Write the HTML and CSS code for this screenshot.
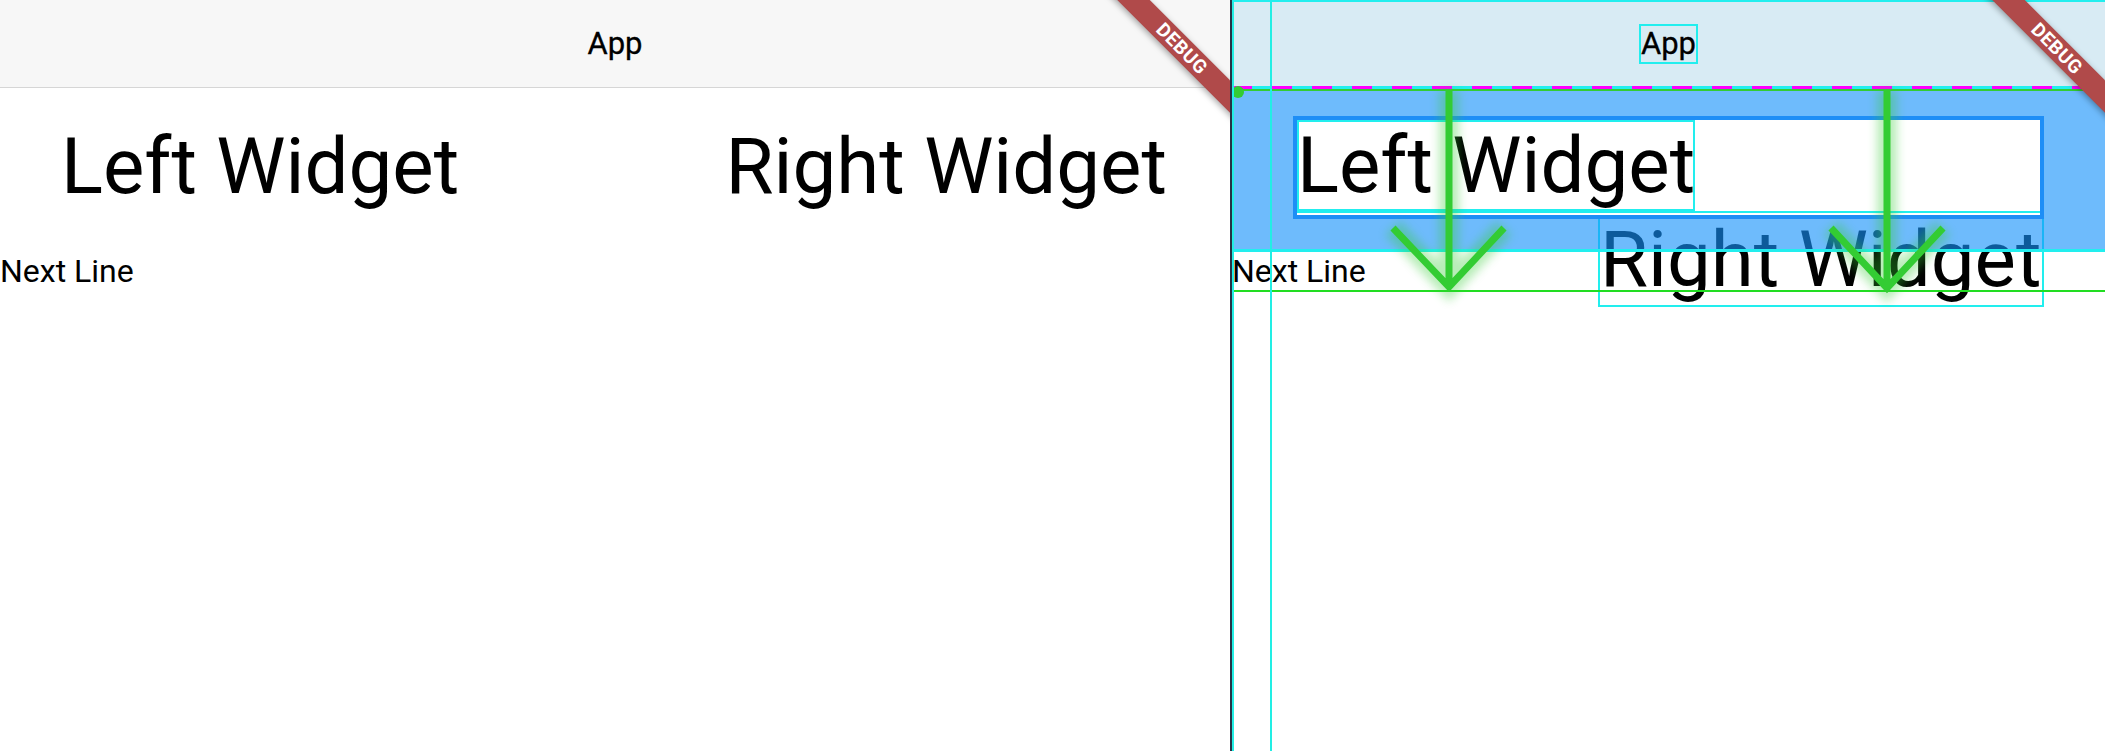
FILE: index.html
```html
<!DOCTYPE html>
<html lang="en">
<head>
    <meta charset="UTF-8">
    <meta name="viewport" content="width=device-width, initial-scale=1.0">
    <title>App</title>

    <link rel="stylesheet" href="styles.css">
</head>
<body>
  <div class="screen">
    <!-- normal view -->
    <section class="pane plain">
      <header class="appbar"><span class="title">App</span></header>
      <div class="row">
        <span class="big">Left Widget</span>
        <span class="big">Right Widget</span>
      </div>
      <div class="next">Next Line</div>
      <div class="banner">DEBUG</div>
    </section>

    <div class="divider"></div>

    <!-- same page with debug paint on -->
    <section class="pane debug">
      <header class="appbar"><span class="title boxed">App</span></header>
      <div class="row wrapped">
        <div class="card">
          <div class="card-line"><span class="big boxed">Left Widget</span></div>
        </div>
      </div>
      <span class="big overflow">Right Widget</span>
      <div class="next ruled">Next Line</div>

      <div class="dash"></div>
      <div class="dot"></div>
      <div class="vline first"></div>
      <div class="vline second"></div>
      <div class="hline"></div>

      <svg class="arrows" width="873" height="751" viewBox="0 0 873 751">
        <g class="glow">
          <path d="M217 90 V287 M161 228 L217 287 L272 228"/>
          <path d="M655 90 V288 M599 228 L655 288 L711 228"/>
        </g>
        <g class="core">
          <path d="M217 90 V287 M161 228 L217 287 L272 228"/>
          <path d="M655 90 V288 M599 228 L655 288 L711 228"/>
        </g>
      </svg>

      <div class="banner">DEBUG</div>
    </section>
  </div>
</body>
</html>
```

FILE: styles.css
```css
body {
  margin: 0;
  font-family: Roboto, "Liberation Sans", sans-serif;
  color: #000;
  background: #fff;
}

.screen {
  display: flex;
  width: 2105px;
  height: 751px;
}

.pane {
  position: relative;
  height: 751px;
  overflow: hidden;
}

.pane.plain {
  width: 1230px;
}

.pane.debug {
  flex: 1;
}

.divider {
  width: 2px;
  background: #283246;
}

/* app bar */
.appbar {
  height: 88px;
  box-sizing: border-box;
  display: flex;
  align-items: center;
  justify-content: center;
  background: #f7f7f7;
  border-bottom: 1px solid #d6d6d6;
}

.debug .appbar {
  background: #d8ebf4;
  border-bottom: none;
}

.title {
  font-size: 31px;
  font-weight: 400;
  line-height: 36px;
  -webkit-text-stroke: 0.3px #000;
}

.boxed {
  outline: 2px solid #22eeee;
}

/* content */
.row {
  height: 164px;
  box-sizing: border-box;
  display: flex;
  justify-content: space-between;
  align-items: flex-start;
  padding: 33px 63px 0 61px;
}

.big {
  font-size: 78px;
  line-height: 91px;
  white-space: nowrap;
}

.next {
  font-size: 32px;
  line-height: 37px;
  padding-top: 1px;
}

/* debug pane */
.row.wrapped {
  position: relative;
  z-index: 2;
  display: block;
  padding: 28px 0 0 61px;
  background: rgba(21, 145, 250, 0.62);
  border-bottom: 3px solid #22eeee;
}

.card {
  width: 751px;
  box-sizing: border-box;
  border: 4px solid #1e8ef6;
  background: #fff;
  padding-bottom: 2px;
}

.card-line {
  border-bottom: 2px solid #22eeee;
}

.card .big {
  display: inline-block;
  outline-offset: -2px;
}

.overflow {
  position: absolute;
  z-index: 1;
  left: 366px;
  top: 212px;
  border: 2px solid #22eeee;
}

.next.ruled {
  position: relative;
  z-index: 3;
  border-bottom: 2px solid #22dd22;
}

.dash {
  position: absolute;
  z-index: 4;
  top: 86px;
  left: 0;
  right: 0;
  height: 3px;
  background: repeating-linear-gradient(90deg, #ff00ff 0 20px, #22eeee 20px 40px);
  border-bottom: 2px solid #33cc33;
}

.dot {
  position: absolute;
  z-index: 4;
  left: 0;
  top: 86px;
  width: 12px;
  height: 12px;
  border-radius: 50%;
  background: #33cc33;
}

.vline {
  position: absolute;
  z-index: 5;
  top: 0;
  bottom: 0;
  width: 2px;
  background: #22eee4;
}

.vline.first {
  left: 0;
}

.vline.second {
  left: 38px;
}

.hline {
  position: absolute;
  z-index: 5;
  top: 0;
  left: 0;
  right: 0;
  height: 2px;
  background: #22eeee;
}

.arrows {
  position: absolute;
  z-index: 6;
  left: 0;
  top: 0;
  pointer-events: none;
}

.arrows path {
  fill: none;
  stroke: #33cc33;
  stroke-linejoin: miter;
}

.arrows .glow path {
  stroke-width: 20px;
  opacity: 0.35;
  filter: blur(5px);
}

.arrows .core path {
  stroke-width: 7px;
}

/* debug ribbon */
.banner {
  position: absolute;
  z-index: 10;
  top: 37px;
  right: -62px;
  width: 220px;
  height: 23px;
  transform: rotate(45deg);
  background: #b04a4a;
  color: #fff;
  font-size: 19px;
  font-weight: 700;
  line-height: 23px;
  letter-spacing: 0.5px;
  text-align: center;
  box-shadow: 0 2px 6px rgba(0, 0, 0, 0.35);
}
```
